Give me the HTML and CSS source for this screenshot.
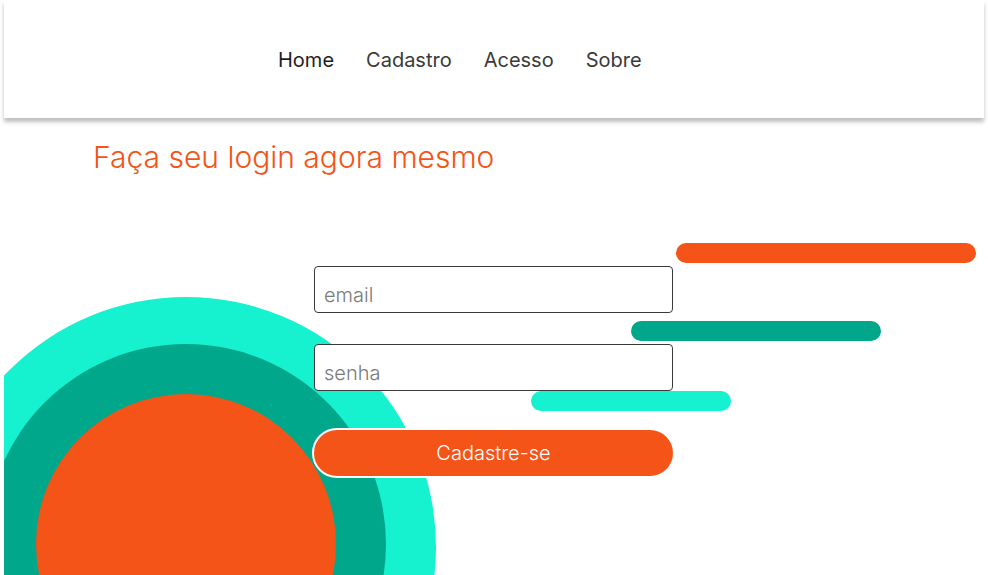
FILE: index.html
```html
<!DOCTYPE html>
<html lang="pt-BR">
<head>
<meta charset="utf-8">
<title>Login</title>
<link rel="stylesheet" href="styles.css">
</head>
<body>
<div class="page">
  <header class="topbar">
    <nav class="nav">
      <a class="nav-link active" href="#">Home</a>
      <a class="nav-link" href="#">Cadastro</a>
      <a class="nav-link" href="#">Acesso</a>
      <a class="nav-link" href="#">Sobre</a>
    </nav>
  </header>
  <main class="main">
    <div class="circle circle-outer"></div>
    <div class="circle circle-mid"></div>
    <div class="circle circle-inner"></div>
    <div class="bar bar-orange"></div>
    <div class="bar bar-teal"></div>
    <div class="bar bar-cyan"></div>
    <h1 class="title">Faça seu login agora mesmo</h1>
    <form class="form">
      <input class="field" type="email" placeholder="email">
      <input class="field" type="password" placeholder="senha">
      <button class="submit" type="button">Cadastre-se</button>
    </form>
  </main>
</div>
</body>
</html>
```
FILE: styles.css
```css
html, body {
  margin: 0;
  padding: 0;
  background: #ffffff;
}
body {
  font-family: Inter, "Noto Sans", sans-serif;
  overflow: hidden;
}
.page {
  margin: 0 4px;
  height: 575px;
  display: flex;
  flex-direction: column;
}
.topbar {
  height: 118px;
  background: #ffffff;
  box-shadow: 0 4px 4px rgba(0, 0, 0, 0.25);
  display: flex;
  align-items: center;
  position: relative;
  z-index: 2;
}
.nav {
  display: flex;
  gap: 32px;
  padding-left: 274px;
  padding-top: 2px;
}
.nav-link {
  font-size: 20px;
  color: #3a3a3a;
  text-decoration: none;
  font-weight: 400;
}
.nav-link.active {
  color: #1e1e1e;
}
.main {
  position: relative;
  flex: 1;
  overflow: hidden;
}
.circle {
  position: absolute;
  border-radius: 50%;
}
.circle-outer {
  width: 500px;
  height: 500px;
  left: -68px;
  top: 179px;
  background: #16f2d0;
}
.circle-mid {
  width: 400px;
  height: 400px;
  left: -18px;
  top: 226px;
  background: #00a78a;
}
.circle-inner {
  width: 300px;
  height: 300px;
  left: 32px;
  top: 276px;
  background: #f45418;
}
.bar {
  position: absolute;
  height: 20px;
  border-radius: 10px;
}
.bar-orange {
  left: 672px;
  top: 125px;
  width: 300px;
  background: #f45418;
}
.bar-teal {
  left: 627px;
  top: 203px;
  width: 250px;
  background: #00a78a;
}
.bar-cyan {
  left: 527px;
  top: 273px;
  width: 200px;
  background: #16f2d0;
}
.title {
  position: relative;
  margin: 21px 0 0 89px;
  font-size: 30px;
  font-weight: 300;
  color: #f45418;
  line-height: normal;
}
.form {
  position: relative;
  margin: 91px 0 0 310px;
  width: 359px;
  display: flex;
  flex-direction: column;
  align-items: flex-start;
}
.field {
  box-sizing: border-box;
  width: 359px;
  height: 47px;
  margin: 0;
  border: 1px solid #3a3a3a;
  border-radius: 4px;
  padding: 10px 9px 0;
  font-family: Inter, "Noto Sans", sans-serif;
  font-size: 20px;
  font-weight: 300;
  color: #333333;
  background: #ffffff;
  outline: none;
}
.field + .field {
  margin-top: 31px;
}
.field::placeholder {
  color: #7a7a7a;
}
.submit {
  box-sizing: border-box;
  margin: 37px 0 0 -2px;
  padding: 0;
  width: 363px;
  height: 50px;
  border: 2px solid #ffffff;
  border-radius: 25px;
  background: #f45418;
  color: #ffffff;
  font-family: Inter, "Noto Sans", sans-serif;
  font-size: 20px;
  font-weight: 300;
  cursor: pointer;
}
```
